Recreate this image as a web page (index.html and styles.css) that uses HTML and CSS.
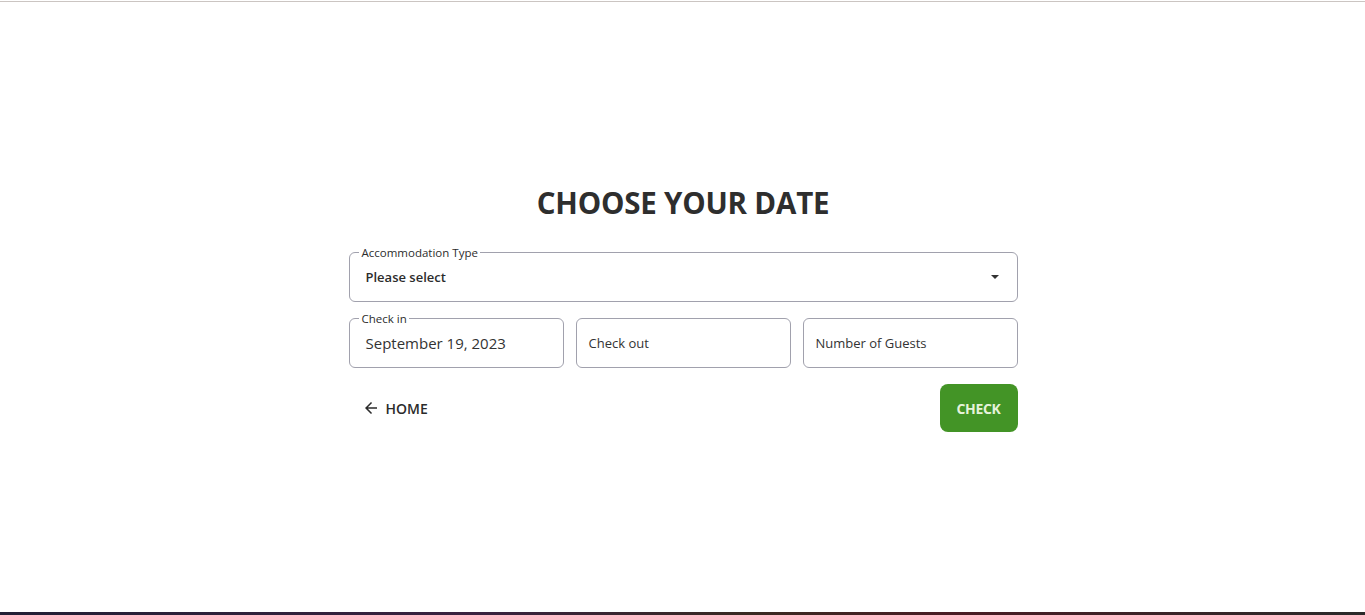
FILE: index.html
```html
<!DOCTYPE html>
<html lang="en">
<head>
<meta charset="utf-8">
<title>Choose your date</title>
<link rel="stylesheet" href="styles.css">
</head>
<body>
<div class="topline"></div>
<main class="page">
  <section class="form">
    <h1 class="title">CHOOSE YOUR DATE</h1>
    <div class="field field-select">
      <span class="legend">Accommodation Type</span>
      <span class="value-bold">Please select</span>
      <svg class="caret" width="8" height="4" viewBox="0 0 10 5"><path d="M0 0h10L5 5z" fill="#333"/></svg>
    </div>
    <div class="row">
      <div class="field">
        <span class="legend">Check in</span>
        <span class="value-date">September 19, 2023</span>
      </div>
      <div class="field plain"><span class="placeholder">Check out</span></div>
      <div class="field plain"><span class="placeholder">Number of Guests</span></div>
    </div>
    <div class="actions">
      <button class="btn-home">
        <svg width="18" height="18" viewBox="0 0 24 24"><path d="M20 11H7.83l5.59-5.59L12 4l-8 8 8 8 1.41-1.41L7.83 13H20v-2z" fill="#2b2b2b"/></svg>
        <span>HOME</span>
      </button>
      <button class="btn-check">CHECK</button>
    </div>
  </section>
</main>
<div class="bottomline"></div>
</body>
</html>
```
FILE: styles.css
```css
* { box-sizing: border-box; }
html, body { margin: 0; padding: 0; background: #fff; }
body {
  font-family: "Open Sans", "Noto Sans", sans-serif;
  color: #2d2d2d;
  height: 615px;
  display: flex;
  flex-direction: column;
  overflow: hidden;
}
.topline { height: 2px; border-top: 1px solid #fff; background: #cbc5c2; flex: none; }
.page { flex: 1; display: flex; justify-content: center; padding-left: 1px; }
.form { width: 669px; padding-top: 181px; display: flex; flex-direction: column; }
.title {
  margin: 0 0 29px;
  text-align: center;
  font-size: 29.5px;
  font-weight: 700;
  line-height: 40px;
  color: #2e2e2e;
  letter-spacing: -0.2px;
}
.field {
  border: 1px solid #a1a1ad;
  border-radius: 6px;
  height: 50px;
  padding: 0 12px 0 16px;
  display: flex;
  align-items: center;
  position: relative;
  min-width: 0;
}
.legend {
  position: absolute;
  top: -7px;
  left: 9px;
  background: #fff;
  font-size: 11.5px;
  line-height: 13px;
  padding: 0 2px 0 3px;
  color: #2d2d2d;
}
.field-select { justify-content: space-between; padding-right: 18px; }
.value-bold { font-size: 13px; font-weight: 600; color: #2b2b2b; }
.value-date { font-size: 15px; color: #333; }
.row {
  margin-top: 16px;
  display: grid;
  grid-template-columns: repeat(3, 1fr);
  gap: 12px;
}
.plain { padding-left: 12px; }
.placeholder { font-size: 13px; color: #333; }
.actions {
  margin-top: 16px;
  display: flex;
  justify-content: space-between;
  align-items: center;
}
.btn-home {
  border: 0;
  background: none;
  font-family: inherit;
  font-size: 14px;
  font-weight: 600;
  color: #2b2b2b;
  display: flex;
  align-items: center;
  gap: 6px;
  padding: 0 0 0 13px;
  height: 48px;
}
.btn-check {
  border: 0;
  background: #439426;
  color: #e6f3da;
  font-family: inherit;
  font-size: 14px;
  font-weight: 700;
  width: 78px;
  height: 48px;
  border-radius: 8px;
  letter-spacing: -0.3px;
}
.bottomline { height: 3px; background: linear-gradient(90deg, #221f35, #3a2240 35%, #3a2a22 55%, #4a1c24 70%, #2a2a2a); flex: none; }
```
